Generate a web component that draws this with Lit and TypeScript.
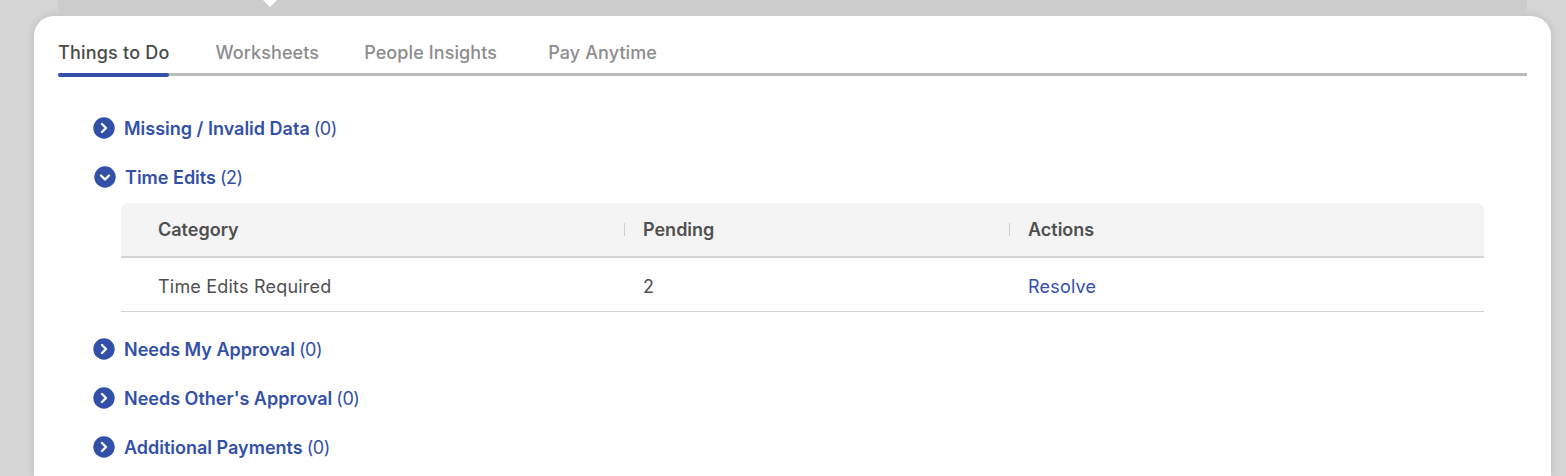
import { LitElement, html, css } from "lit";
import { customElement } from "lit/decorators.js";

const chevronRight = html`<svg class="ic" viewBox="0 0 22 22"><circle cx="11" cy="11" r="10.7" fill="#3350a8"></circle><path d="M9 7l4 4-4 4" fill="none" stroke="#fff" stroke-width="2.4" stroke-linecap="round" stroke-linejoin="round"></path></svg>`;
const chevronDown = html`<svg class="ic" viewBox="0 0 22 22"><circle cx="11" cy="11" r="10.7" fill="#3350a8"></circle><path d="M7 9.5l4 4 4-4" fill="none" stroke="#fff" stroke-width="2.4" stroke-linecap="round" stroke-linejoin="round"></path></svg>`;

@customElement("app-root")
export class AppRoot extends LitElement {
  static styles = css`
    :host {
      display: block;
      height: 476px;
      overflow: hidden;
      background: #d5d5d5;
      font-family: "Inter", "Liberation Sans", sans-serif;
      color: #4f4f4f;
    }
    .back {
      position: relative;
      height: 16px;
      margin: 0 39px 0 58px;
      background: #cccccc;
      border-radius: 0 0 8px 8px;
    }
    .notch {
      position: absolute;
      left: 207px;
      bottom: 11px;
      width: 10px;
      height: 10px;
      background: #fff;
      transform: rotate(45deg);
    }
    .clip { position: absolute; inset: 0; overflow: hidden; }
    .card {
      height: 460px;
      margin: 0 15px 0 34px;
      padding: 0 24px;
      background: #fff;
      border-radius: 20px 20px 0 0;
      box-shadow: 0 0 8px rgba(0, 0, 0, 0.12);
    }
    .tabs {
      display: flex;
      gap: 46px;
      height: 60px;
      box-sizing: border-box;
      border-bottom: 3px solid #bcbcbc;
      font-size: 18px;
      font-weight: 500;
      letter-spacing: 0.1px;
      color: #8c8c8c;
    }
    .tab {
      position: relative;
      padding-top: 26px;
      line-height: 22px;
    }
    .tab:nth-child(3) { margin-left: -1px; }
    .tab:nth-child(4) { margin-left: 5px; }
    .tab.on { color: #4a4a4a; letter-spacing: 0.2px; }
    .tab.on::after {
      content: "";
      position: absolute;
      left: 0;
      right: 0;
      bottom: -4px;
      height: 4px;
      border-radius: 2px;
      background: #3350a8;
    }
    .list {
      display: flex;
      flex-direction: column;
      padding: 27px 0 0 35px;
    }
    .row {
      display: flex;
      align-items: center;
      gap: 9px;
      height: 49px;
      font-size: 18px;
      color: #3350a8;
    }
    .label { padding-top: 2px; }
    .row b { font-weight: 600; }
    .row span { font-weight: 400; letter-spacing: -0.5px; margin-left: -1px; }
    .row.open { padding-left: 1px; margin-bottom: 2px; }
    .ic { width: 22px; height: 22px; flex: none; }
    .table {
      margin: 0 43px 12px 28px;
      font-size: 18px;
    }
    .grid {
      display: grid;
      grid-template-columns: 504px 385px 1fr;
      align-items: center;
    }
    .head {
      height: 53px;
      background: #f4f4f4;
      border-radius: 8px 8px 0 0;
      border-bottom: 2px solid #d4d4d4;
      font-weight: 600;
    }
    .body {
      height: 50px;
      padding-top: 3px;
      border-bottom: 1px solid #d4d4d4;
      letter-spacing: 0.2px;
    }
    .cell { padding-left: 37px; }
    .next { padding-left: 18px; }
    .head .next { position: relative; }
    .head .next::before {
      content: "";
      position: absolute;
      left: -1px;
      top: 4px;
      bottom: 4px;
      width: 1px;
      background: #cfcfcf;
    }
    .link { color: #3350a8; }
  `;

  private row(name: string, count: number) {
    return html`<div class="row">${chevronRight}<div class="label"><b>${name}</b> <span>(${count})</span></div></div>`;
  }

  render() {
    return html`
      <div class="back"><div class="clip"><div class="notch"></div></div></div>
      <div class="card">
        <div class="tabs">
          <div class="tab on">Things to Do</div>
          <div class="tab">Worksheets</div>
          <div class="tab">People Insights</div>
          <div class="tab">Pay Anytime</div>
        </div>
        <div class="list">
          ${this.row("Missing / Invalid Data", 0)}
          <div class="row open">${chevronDown}<div class="label"><b>Time Edits</b> <span>(2)</span></div></div>
          <div class="table">
            <div class="grid head">
              <div class="cell">Category</div>
              <div class="next">Pending</div>
              <div class="next">Actions</div>
            </div>
            <div class="grid body">
              <div class="cell">Time Edits Required</div>
              <div class="next">2</div>
              <div class="next link">Resolve</div>
            </div>
          </div>
          ${this.row("Needs My Approval", 0)}
          ${this.row("Needs Other's Approval", 0)}
          ${this.row("Additional Payments", 0)}
        </div>
      </div>
    `;
  }
}
